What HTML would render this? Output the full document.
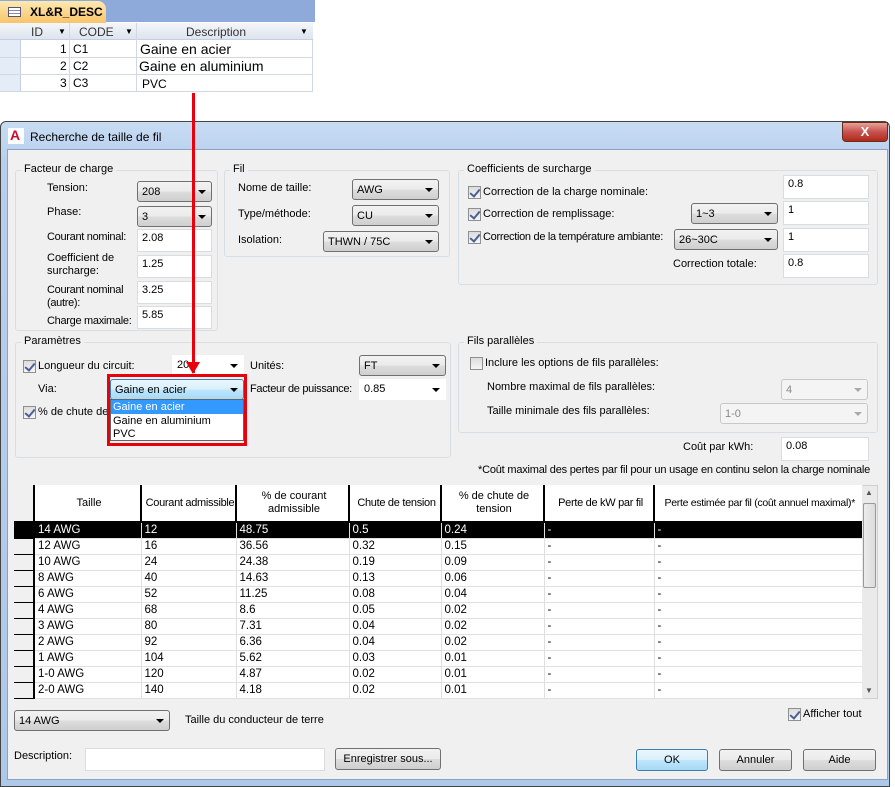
<!DOCTYPE html>
<html><head><meta charset="utf-8"><style>
*{box-sizing:border-box}
body{margin:0;width:895px;height:787px;background:#fff;position:relative;overflow:hidden;font-family:"Liberation Sans",sans-serif;font-size:11px;color:#000}
.a{position:absolute;white-space:nowrap}
.grp{position:absolute;border:1px solid #d5dfe5;border-radius:3px}
.gl{position:absolute;background:#f0f0f0;padding:0 3px;top:-8px;left:5px;font-size:11px}
.cb{position:absolute;height:21px;border:1px solid #707070;border-radius:3px;background:linear-gradient(#f2f2f2,#ebebeb 50%,#dddddd 51%,#cfcfcf);padding:4px 4px;}
.cb:after{content:"";position:absolute;right:5px;top:8px;border-left:4px solid transparent;border-right:4px solid transparent;border-top:4px solid #000}
.cw{position:absolute;height:21px;background:#fff;padding:3px 4px;border:1px solid #fff}
.cw:after{content:"";position:absolute;right:5px;top:8px;border-left:4px solid transparent;border-right:4px solid transparent;border-top:4px solid #000}
.dis{border:1px solid #c8c8c8;background:#f4f4f4;color:#888}
.dis:after{border-top-color:#aaa}
.in{position:absolute;background:#fff;border:1px solid #d8dde3;padding:2px 4px}
.ck{position:absolute;width:13px;height:13px;border:1px solid #8e8f8f;background:linear-gradient(#dcdcdc,#f6f6f6)}
.ck.on:after{content:"";position:absolute;left:3px;top:0px;width:4px;height:8px;border-right:2px solid #4a5f97;border-bottom:2px solid #4a5f97;transform:rotate(40deg)}
.btn{position:absolute;height:22px;border:1px solid #707070;border-radius:3px;background:linear-gradient(#f2f2f2,#ebebeb 50%,#dddddd 51%,#cfcfcf);text-align:center;padding-top:4px}
table{border-collapse:collapse}
.grid td{height:16px;border-right:1px solid #e0e0e0;border-bottom:1px solid #e0e0e0;padding:0 0 0 3px;font-size:11.5px;line-height:15px;overflow:hidden;white-space:nowrap}
.grid td.rh{background:#f0f0f0;border-right:2px solid #000;border-bottom:1px solid #000;padding:0}
.grid tr.sel td{background:#000;color:#fff}
</style></head><body>

<!-- Access table -->
<div class="a" style="left:0;top:0;width:315px;height:22px;background:#8eaadb"></div>
<div class="a" style="left:0;top:1px;width:106px;height:22px;background:linear-gradient(#fde9b3,#f9c46a);border-radius:0 8px 0 0;font-weight:bold;font-size:12px;padding:4px 0 0 30px">XL&amp;R_DESC</div>
<div class="a" style="left:8px;top:7px;width:13px;height:10px;border:1px solid #557;background:repeating-linear-gradient(#fff 0 2px,#88a 2px 3px)"></div>
<div class="a" style="left:0;top:23px;width:313px;height:69px;background:#fff;border-right:1px solid #d0d7e5"></div>
<div class="a" style="left:0;top:23px;width:313px;height:17px;background:linear-gradient(#f4f6fa,#dde4ee);border-bottom:1px solid #c5cfdf"></div>
<div class="a" style="left:0;top:40px;width:21px;height:52px;background:#e4ecf7;border-right:1px solid #c5cfdf"></div>
<div class="a" style="left:31px;top:25px;color:#333;font-size:12px">ID</div><div class="a" style="left:58px;top:27px;font-size:8px">▼</div>
<div class="a" style="left:79px;top:25px;color:#333;font-size:12px">CODE</div><div class="a" style="left:125px;top:27px;font-size:8px">▼</div>
<div class="a" style="left:186px;top:25px;color:#333;font-size:12px">Description</div><div class="a" style="left:300px;top:27px;font-size:8px">▼</div>
<div class="a" style="left:69px;top:23px;width:1px;height:69px;background:#d0d7e5"></div>
<div class="a" style="left:136px;top:23px;width:1px;height:69px;background:#d0d7e5"></div>
<div class="a" style="left:0;top:57px;width:313px;height:1px;background:#d0d7e5"></div>
<div class="a" style="left:0;top:74px;width:313px;height:1px;background:#d0d7e5"></div>
<div class="a" style="left:0;top:91px;width:313px;height:1px;background:#d0d7e5"></div>
<div class="a" style="left:60px;top:42px;font-size:12px">1</div><div class="a" style="left:73px;top:42px;font-size:12px">C1</div><div class="a" style="left:140px;top:41px;font-size:14px">Gaine en acier</div>
<div class="a" style="left:60px;top:59px;font-size:12px">2</div><div class="a" style="left:73px;top:59px;font-size:12px">C2</div><div class="a" style="left:139px;top:58px;font-size:14px">Gaine en aluminium</div>
<div class="a" style="left:60px;top:76px;font-size:12px">3</div><div class="a" style="left:73px;top:76px;font-size:12px">C3</div><div class="a" style="left:142px;top:77px;font-size:12px">PVC</div>

<!-- Window -->
<div class="a" style="left:0;top:121px;width:890px;height:666px;background:linear-gradient(#c8dcf3,#b7cfee 40px,#aec8ea);border:1px solid #444;border-radius:6px 6px 0 0"></div>
<div class="a" style="left:8px;top:128px;width:16px;height:16px;background:#fff"></div>
<div class="a" style="left:10px;top:127px;color:#c8102e;font-weight:bold;font-size:14px">A</div>
<div class="a" style="left:30px;top:130px;font-size:12px">Recherche de taille de fil</div>
<div class="a" style="left:842px;top:122px;width:46px;height:20px;background:linear-gradient(#e8a493,#c75050 50%,#b02b15);border:1px solid #6b2a20;border-radius:0 0 4px 4px;color:#fff;font-weight:bold;text-align:center;font-size:13px;line-height:17px">X</div>
<div class="a" style="left:7px;top:149px;width:881px;height:631px;background:#f0f0f0;border:1px solid #8da2bf"></div>

<!-- Facteur de charge -->
<div class="grp" style="left:15px;top:170px;width:203px;height:161px"><span class="gl">Facteur de charge</span></div>
<div class="a" style="left:47px;top:182px">Tension:</div>
<div class="cb" style="left:137px;top:181px;width:75px">208</div>
<div class="a" style="left:47px;top:206px">Phase:</div>
<div class="cb" style="left:137px;top:206px;width:75px">3</div>
<div class="a" style="left:47px;top:231px;letter-spacing:-0.3px">Courant nominal:</div>
<div class="in" style="left:137px;top:229px;width:75px;height:23px">2.08</div>
<div class="a" style="left:47px;top:252px;line-height:13px">Coefficient de<br>surcharge:</div>
<div class="in" style="left:137px;top:255px;width:75px;height:23px">1.25</div>
<div class="a" style="left:47px;top:284px;line-height:13px;letter-spacing:-0.3px">Courant nominal<br>(autre):</div>
<div class="in" style="left:137px;top:281px;width:75px;height:23px">3.25</div>
<div class="a" style="left:47px;top:315px;letter-spacing:-0.3px">Charge maximale:</div>
<div class="in" style="left:137px;top:306px;width:75px;height:23px">5.85</div>

<!-- Fil -->
<div class="grp" style="left:224px;top:170px;width:226px;height:87px"><span class="gl">Fil</span></div>
<div class="a" style="left:238px;top:182px">Nome de taille:</div>
<div class="cb" style="left:352px;top:179px;width:87px">AWG</div>
<div class="a" style="left:238px;top:208px">Type/méthode:</div>
<div class="cb" style="left:352px;top:205px;width:87px">CU</div>
<div class="a" style="left:238px;top:234px">Isolation:</div>
<div class="cb" style="left:323px;top:231px;width:116px">THWN / 75C</div>

<!-- Coefficients -->
<div class="grp" style="left:458px;top:170px;width:420px;height:115px"><span class="gl">Coefficients de surcharge</span></div>
<div class="ck on" style="left:468px;top:186px"></div><div class="a" style="left:483px;top:186px">Correction de la charge nominale:</div>
<div class="in" style="left:783px;top:175px;width:86px;height:24px">0.8</div>
<div class="ck on" style="left:468px;top:208px"></div><div class="a" style="left:483px;top:208px">Correction de remplissage:</div>
<div class="cb" style="left:691px;top:203px;width:87px">1~3</div>
<div class="in" style="left:783px;top:201px;width:86px;height:24px">1</div>
<div class="ck on" style="left:468px;top:231px"></div><div class="a" style="left:483px;top:231px;letter-spacing:-0.3px">Correction de la température ambiante:</div>
<div class="cb" style="left:674px;top:229px;width:104px">26~30C</div>
<div class="in" style="left:783px;top:228px;width:86px;height:24px">1</div>
<div class="a" style="left:673px;top:258px">Correction totale:</div>
<div class="in" style="left:783px;top:254px;width:86px;height:24px">0.8</div>

<!-- Paramètres -->
<div class="grp" style="left:15px;top:342px;width:436px;height:116px"><span class="gl">Paramètres</span></div>
<div class="ck on" style="left:23px;top:360px"></div><div class="a" style="left:38px;top:360px">Longueur du circuit:</div>
<div class="cw" style="left:172px;top:355px;width:72px">20</div>
<div class="a" style="left:250px;top:360px">Unités:</div>
<div class="cb" style="left:359px;top:355px;width:87px">FT</div>
<div class="a" style="left:38px;top:383px">Via:</div>
<div class="cb" style="left:110px;top:379px;width:134px;background:linear-gradient(#eaf6fd,#d9f0fc 50%,#bee6fd 51%,#a7d9f5);border-color:#3c7fb1">Gaine en acier</div>
<div class="a" style="left:250px;top:383px;letter-spacing:-0.3px">Facteur de puissance:</div>
<div class="cw" style="left:359px;top:379px;width:87px">0.85</div>
<div class="ck on" style="left:23px;top:406px"></div><div class="a" style="left:38px;top:406px">% de chute de</div>
<div class="a" style="left:110px;top:399px;width:134px;height:42px;background:#fff;border:1px solid #646464"></div>
<div class="a" style="left:111px;top:400px;width:132px;height:14px;background:#3399ff;color:#fff;padding-left:2px;line-height:14px">Gaine en acier</div>
<div class="a" style="left:113px;top:414px;line-height:14px">Gaine en aluminium</div>
<div class="a" style="left:113px;top:427px;line-height:14px">PVC</div>
<div class="a" style="left:107px;top:374px;width:140px;height:72px;border:3px solid #e8000a"></div>

<!-- Fils parallèles -->
<div class="grp" style="left:458px;top:342px;width:420px;height:91px"><span class="gl">Fils parallèles</span></div>
<div class="ck" style="left:470px;top:357px"></div><div class="a" style="left:485px;top:357px">Inclure les options de fils parallèles:</div>
<div class="a" style="left:487px;top:381px">Nombre maximal de fils parallèles:</div>
<div class="cb dis" style="left:781px;top:379px;width:87px">4</div>
<div class="a" style="left:487px;top:405px">Taille minimale des fils parallèles:</div>
<div class="cb dis" style="left:720px;top:403px;width:148px">1-0</div>
<div class="a" style="left:683px;top:441px">Coût par kWh:</div>
<div class="in" style="left:781px;top:437px;width:88px;height:24px">0.08</div>
<div class="a" style="left:478px;top:464px;letter-spacing:-0.2px">*Coût maximal des pertes par fil pour un usage en continu selon la charge nominale</div>

<!-- Red arrow -->
<div class="a" style="left:192px;top:93px;width:3px;height:280px;background:#e8000a"></div>
<div class="a" style="left:186px;top:362px;width:0;height:0;border-left:7px solid transparent;border-right:7px solid transparent;border-top:12px solid #e8000a"></div>

<!-- Grid -->
<div class="a" style="left:14px;top:485px;width:864px;height:214px;background:#fff;border:1px solid #d0d0d0"></div>
<table class="a grid" style="left:14px;top:485px;width:848px;table-layout:fixed">
<colgroup><col style="width:20px"><col style="width:107px"><col style="width:95px"><col style="width:113px"><col style="width:92px"><col style="width:103px"><col style="width:110px"><col style="width:208px"></colgroup>
<tr style="background:#fff"><td class="rh" style="height:37px;border-bottom:2px solid #000"></td>
<td style="height:37px;text-align:center;border-right:2px solid #000;border-bottom:2px solid #000;font-size:11px">Taille</td>
<td style="text-align:center;border-right:2px solid #000;border-bottom:2px solid #000;font-size:11px;letter-spacing:-0.3px">Courant admissible</td>
<td style="text-align:center;border-right:2px solid #000;border-bottom:2px solid #000;line-height:13px;font-size:11px">% de courant<br>admissible</td>
<td style="text-align:center;border-right:2px solid #000;border-bottom:2px solid #000;font-size:11px;letter-spacing:-0.3px">Chute de tension</td>
<td style="text-align:center;border-right:2px solid #000;border-bottom:2px solid #000;line-height:13px;font-size:11px">% de chute de<br>tension</td>
<td style="text-align:center;border-right:2px solid #000;border-bottom:2px solid #000;font-size:11px;letter-spacing:-0.3px">Perte de kW par fil</td>
<td style="text-align:center;border-bottom:2px solid #000;font-size:10.5px;letter-spacing:-0.3px">Perte estimée par fil (coût annuel maximal)*</td></tr>
<tr class="sel"><td class="rh" style="background:#000"></td><td>14 AWG</td><td>12</td><td>48.75</td><td>0.5</td><td>0.24</td><td>-</td><td>-</td></tr>
<tr><td class="rh"></td><td>12 AWG</td><td>16</td><td>36.56</td><td>0.32</td><td>0.15</td><td>-</td><td>-</td></tr>
<tr><td class="rh"></td><td>10 AWG</td><td>24</td><td>24.38</td><td>0.19</td><td>0.09</td><td>-</td><td>-</td></tr>
<tr><td class="rh"></td><td>8 AWG</td><td>40</td><td>14.63</td><td>0.13</td><td>0.06</td><td>-</td><td>-</td></tr>
<tr><td class="rh"></td><td>6 AWG</td><td>52</td><td>11.25</td><td>0.08</td><td>0.04</td><td>-</td><td>-</td></tr>
<tr><td class="rh"></td><td>4 AWG</td><td>68</td><td>8.6</td><td>0.05</td><td>0.02</td><td>-</td><td>-</td></tr>
<tr><td class="rh"></td><td>3 AWG</td><td>80</td><td>7.31</td><td>0.04</td><td>0.02</td><td>-</td><td>-</td></tr>
<tr><td class="rh"></td><td>2 AWG</td><td>92</td><td>6.36</td><td>0.04</td><td>0.02</td><td>-</td><td>-</td></tr>
<tr><td class="rh"></td><td>1 AWG</td><td>104</td><td>5.62</td><td>0.03</td><td>0.01</td><td>-</td><td>-</td></tr>
<tr><td class="rh"></td><td>1-0 AWG</td><td>120</td><td>4.87</td><td>0.02</td><td>0.01</td><td>-</td><td>-</td></tr>
<tr><td class="rh"></td><td>2-0 AWG</td><td>140</td><td>4.18</td><td>0.02</td><td>0.01</td><td>-</td><td>-</td></tr>
</table>
<div class="a" style="left:862px;top:486px;width:15px;height:212px;background:#eaeaea"></div>
<div class="a" style="left:863px;top:503px;width:13px;height:85px;background:linear-gradient(90deg,#ececec,#dcdcdc);border:1px solid #999;border-radius:2px"></div>
<div class="a" style="left:865px;top:488px;font-size:8px;color:#555">▲</div>
<div class="a" style="left:865px;top:686px;font-size:8px;color:#555">▼</div>

<!-- Bottom -->
<div class="cb" style="left:14px;top:710px;width:156px">14 AWG</div>
<div class="a" style="left:185px;top:714px">Taille du conducteur de terre</div>
<div class="ck on" style="left:788px;top:708px"></div><div class="a" style="left:803px;top:708px">Afficher tout</div>
<div class="a" style="left:14px;top:750px">Description:</div>
<div class="in" style="left:85px;top:748px;width:240px;height:23px"></div>
<div class="btn" style="left:335px;top:748px;width:106px">Enregistrer sous...</div>
<div class="btn" style="left:636px;top:749px;width:72px;border-color:#3c7fb1;background:linear-gradient(#eaf6fd,#d9f0fc 50%,#bee6fd 51%,#a7d9f5)">OK</div>
<div class="btn" style="left:719px;top:749px;width:73px">Annuler</div>
<div class="btn" style="left:803px;top:749px;width:73px">Aide</div>
</body></html>
